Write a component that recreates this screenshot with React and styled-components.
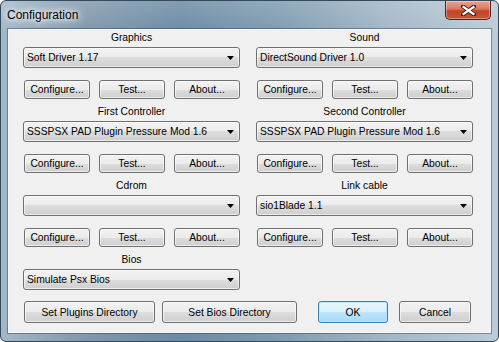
import React from 'react';
import styled, { createGlobalStyle } from 'styled-components';

const GlobalStyle = createGlobalStyle`
html, body {
  margin: 0;
  padding: 0;
  background: #ffffff;
}
`;

const Window = styled.div`
width: 499px;
height: 342px;
box-sizing: border-box;
display: flex;
flex-direction: column;
border: 1px solid #34495a;
border-radius: 6px;
overflow: hidden;
background:
  linear-gradient(180deg, rgba(255,255,255,0.16) 0%, rgba(255,255,255,0) 10%),
  linear-gradient(90deg, #a3b8c8 0%, #8299ae 16%, #6b8aa3 36%, #7f9bb1 56%, #a2b7c7 78%, #bccbd7 100%);
font-family: "Liberation Sans", Arial, sans-serif;
`;

const TitleBar = styled.div`
height: 28px;
flex-shrink: 0;
display: flex;
justify-content: space-between;
align-items: flex-start;
padding-left: 6px;
`;

const Title = styled.div`
margin-top: 6px;
font-size: 12px;
line-height: 16px;
color: #000;
text-shadow: 0 0 5px #fff, 0 0 9px #fff, 0 0 12px rgba(255,255,255,0.9);
`;

const CloseButton = styled.div`
width: 46px;
height: 19px;
margin-right: 7px;
box-sizing: border-box;
display: flex;
align-items: center;
justify-content: center;
border: 1px solid #54231a;
border-top: none;
border-radius: 0 0 5px 5px;
background: linear-gradient(180deg, #e8a796 0%, #d7765f 45%, #c04325 55%, #c9573a 100%);
box-shadow: inset 0 0 0 1px rgba(255,255,255,0.35);
`;

const Client = styled.div`
flex: 1;
margin: 0 7px 8px 7px;
box-sizing: border-box;
border: 1px solid #f4f7f9;
box-shadow: 0 0 0 1px rgba(40,60,80,0.45);
background: #f0f0f0;
padding: 1px 0 0 14px;
display: grid;
grid-template-columns: 217px 217px;
column-gap: 16px;
row-gap: 6px;
align-content: start;
font-size: 10.3px;
`;

const Section = styled.div`
display: flex;
flex-direction: column;
`;

const Label = styled.div`
height: 14px;
line-height: 14px;
margin-bottom: 2px;
text-align: center;
color: #000;
`;

const Combo = styled.div`
height: 21px;
box-sizing: border-box;
display: flex;
align-items: center;
justify-content: space-between;
padding: 0 5px 0 3px;
border: 1px solid #707070;
border-radius: 3px;
background: linear-gradient(180deg, #f2f2f2 0%, #ebebeb 50%, #dddddd 50%, #cfcfcf 100%);
box-shadow: inset 0 0 0 1px rgba(255,255,255,0.6);
color: #000;
`;

const ButtonRow = styled.div`
display: flex;
gap: 9px;
margin-top: 12px;
padding-left: 1px;
`;

const Button = styled.div`
width: ${p => p.$w || 66}px;
height: ${p => p.$h || 19}px;
margin-left: ${p => p.$ml || 0}px;
flex-shrink: 0;
box-sizing: border-box;
display: flex;
align-items: center;
justify-content: center;
border: 1px solid ${p => (p.$default ? '#3c7fb1' : '#707070')};
border-radius: 3px;
background: ${p => (p.$default
    ? 'linear-gradient(180deg, #eaf6fd 0%, #d9f0fc 50%, #bee6fd 50%, #a7d9f5 100%)'
    : 'linear-gradient(180deg, #f2f2f2 0%, #ebebeb 50%, #dddddd 50%, #cfcfcf 100%)')};
box-shadow: inset 0 0 0 1px ${p => (p.$default ? 'rgba(180,230,255,0.9)' : 'rgba(255,255,255,0.6)')};
color: #000;
`;

const BottomRow = styled.div`
grid-column: 1 / -1;
display: flex;
margin-top: 5px;
padding-left: 1px;
gap: 7px;
`;

function Arrow() {
    return (
        <svg width="7" height="4" viewBox="0 0 7 4">
            <polygon points="0,0 7,0 3.5,4" fill="#000" />
        </svg>
    );
}

function CloseGlyph() {
    return (
        <svg width="15" height="11" viewBox="0 0 15 11">
            <path d="M2 1.5 L13 9.5 M13 1.5 L2 9.5" stroke="#3d1a12" strokeWidth="4" strokeLinecap="square" />
            <path d="M2.5 2 L12.5 9 M12.5 2 L2.5 9" stroke="#fff" strokeWidth="2.2" strokeLinecap="square" />
        </svg>
    );
}

const plugins = [
    { label: 'Graphics', value: 'Soft Driver 1.17' },
    { label: 'Sound', value: 'DirectSound Driver 1.0' },
    { label: 'First Controller', value: 'SSSPSX PAD Plugin Pressure Mod 1.6' },
    { label: 'Second Controller', value: 'SSSPSX PAD Plugin Pressure Mod 1.6' },
    { label: 'Cdrom', value: '' },
    { label: 'Link cable', value: 'sio1Blade 1.1' },
];

function App() {
    return (
        <>
            <GlobalStyle />
            <Window>
                <TitleBar>
                    <Title>Configuration</Title>
                    <CloseButton><CloseGlyph /></CloseButton>
                </TitleBar>
                <Client>
                    {plugins.map(p => (
                        <Section key={p.label}>
                            <Label>{p.label}</Label>
                            <Combo>
                                <span>{p.value}</span>
                                <Arrow />
                            </Combo>
                            <ButtonRow>
                                <Button>Configure...</Button>
                                <Button>Test...</Button>
                                <Button>About...</Button>
                            </ButtonRow>
                        </Section>
                    ))}
                    <Section>
                        <Label>Bios</Label>
                        <Combo>
                            <span>Simulate Psx Bios</span>
                            <Arrow />
                        </Combo>
                    </Section>
                    <div />
                    <BottomRow>
                        <Button $w={131} $h={22}>Set Plugins Directory</Button>
                        <Button $w={135} $h={22}>Set Bios Directory</Button>
                        <Button $w={70} $h={22} $ml={14} $default>OK</Button>
                        <Button $w={72} $h={22} $ml={4}>Cancel</Button>
                    </BottomRow>
                </Client>
            </Window>
        </>
    );
}

export default App;
